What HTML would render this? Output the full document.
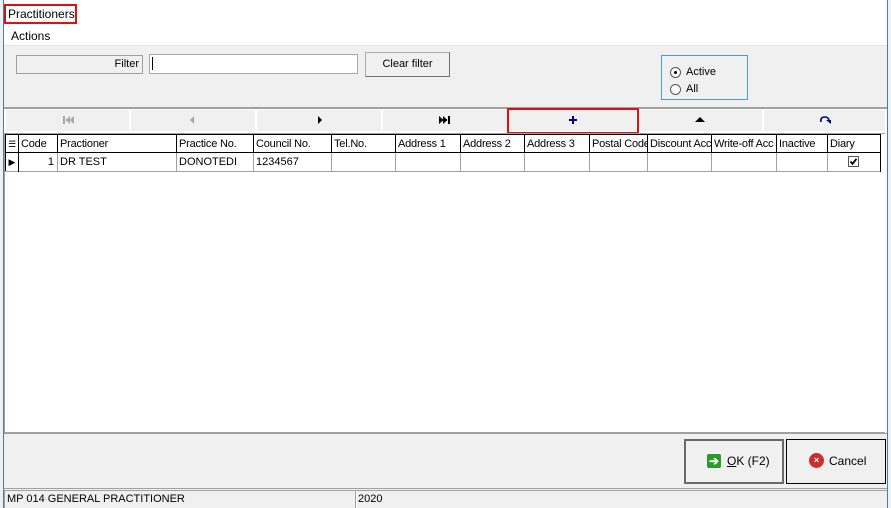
<!DOCTYPE html>
<html><head><style>
*{margin:0;padding:0;box-sizing:border-box}
body{width:891px;height:508px;position:relative;overflow:hidden;background:#fff;font-family:"Liberation Sans",sans-serif;font-size:11px;color:#000}
.a{position:absolute}
.hc{position:absolute;top:0;height:18px;border-right:1px solid #000;padding-left:2px;line-height:18px;white-space:nowrap;overflow:hidden;letter-spacing:-0.2px}
.dc{position:absolute;top:0;height:19px;border-right:1px solid #a0a0a0;padding-left:2px;line-height:19px;white-space:nowrap;overflow:hidden}
.nb{position:absolute;top:110px;height:21px;background:#f0f0f0}
.nb svg{position:absolute;left:50%;top:5px;margin-left:-6px}
</style></head><body>
<div class="a" style="left:0;top:0;width:4px;height:508px;background:#f0f0f0"></div>
<div class="a" style="left:3px;top:0;width:1px;height:508px;background:#3c7fd0"></div>
<div class="a" style="left:887px;top:0;width:4px;height:508px;background:#f0f0f0"></div>
<div class="a" style="left:887px;top:0;width:1px;height:508px;background:#3c7fd0"></div>
<div class="a" style="left:4px;top:4px;width:73px;height:20px;border:2px solid #e01010"></div>
<div class="a" style="left:8px;top:7px;font-size:12px">Practitioners</div>
<div class="a" style="left:11px;top:29px;font-size:12px">Actions</div>
<div class="a" style="left:4px;top:45px;width:883px;height:63px;background:#f0f0f0;border-top:1px solid #e6e6e6"></div>
<div class="a" style="left:16px;top:55px;width:127px;height:19px;border:1px solid #a0a0a0;text-align:right;padding-right:3px;line-height:17px">Filter</div>
<div class="a" style="left:149px;top:54px;width:209px;height:20px;background:#fff;border:1px solid #a8a8a8"></div>
<div class="a" style="left:152px;top:57px;width:1px;height:13px;background:#000"></div>
<div class="a" style="left:365px;top:52px;width:85px;height:25px;border:1px solid #adadad;border-right-color:#707070;border-bottom-color:#707070;background:#f0f0f0;text-align:center;line-height:23px">Clear filter</div>
<div class="a" style="left:661px;top:55px;width:87px;height:45px;border:1px solid #4a98e6"></div>
<div class="a" style="left:670px;top:67px;width:11px;height:11px;border-radius:50%;border:1px solid #555;background:#fff"></div>
<div class="a" style="left:674px;top:71px;width:3px;height:3px;border-radius:50%;background:#000"></div>
<div class="a" style="left:686px;top:66px">Active</div>
<div class="a" style="left:670px;top:84px;width:11px;height:11px;border-radius:50%;border:1px solid #555;background:#fff"></div>
<div class="a" style="left:686px;top:83px">All</div>
<div class="a" style="left:4px;top:107px;width:883px;height:26px;background:#fff;border-top:2px solid #a0a0a0"></div>
<div class="nb" style="left:6px;width:123px"><svg width="12" height="10"><path d="M1 1h2v8H1zM8 1L3.5 5 8 9zM12 1L7.5 5 12 9z" fill="#a8a8a8"/></svg></div>
<div class="nb" style="left:131px;width:124px"><svg width="12" height="10"><path d="M7 1L3 5 7 9z" fill="#a8a8a8"/></svg></div>
<div class="nb" style="left:257px;width:124px"><svg width="12" height="10"><path d="M5 1L9 5 5 9z" fill="#000"/></svg></div>
<div class="nb" style="left:383px;width:124px"><svg width="12" height="10"><path d="M0 1L4.5 5 0 9zM4 1L8.5 5 4 9zM9 1h2v8H9z" fill="#000"/></svg></div>
<div class="nb" style="left:509px;width:127px"><svg width="12" height="10"><path d="M5 1h2v3h3v2H7v3H5V6H2V4h3z" fill="#000080"/></svg></div>
<div class="nb" style="left:638px;width:124px"><svg width="12" height="10"><path d="M1 7L6 2 11 7z" fill="#000"/></svg></div>
<div class="nb" style="left:764px;width:121px"><svg width="12" height="10"><path d="M2 7Q1 2 6 2Q9 2 10 5" fill="none" stroke="#000080" stroke-width="1.6"/><path d="M7 5h5v4z" fill="#000080"/></svg></div>
<div class="a" style="left:507px;top:108px;width:132px;height:26px;border:2px solid #e01010"></div>
<div class="a" style="left:4px;top:133px;width:881px;height:300px;background:#fff;border:1px solid #a0a0a0;border-right:none"></div>
<div class="a" style="left:5px;top:134px;width:876px;height:38px;border:1px solid #000;border-bottom:none"></div>
<div class="a" style="left:5px;top:152px;width:876px;height:1px;background:#000"></div>
<div class="a" style="left:5px;top:171px;width:876px;height:1px;background:#a0a0a0"></div>
<div class="a" style="left:6px;top:135px;width:875px;height:17px">
<div class="hc" style="left:0;width:13px;padding:0;text-align:center;font-size:9px">☰</div>
<div class="hc" style="left:13px;width:39px">Code</div>
<div class="hc" style="left:52px;width:119px">Practioner</div>
<div class="hc" style="left:171px;width:77px">Practice No.</div>
<div class="hc" style="left:248px;width:78px">Council No.</div>
<div class="hc" style="left:326px;width:64px">Tel.No.</div>
<div class="hc" style="left:390px;width:65px">Address 1</div>
<div class="hc" style="left:455px;width:64px">Address 2</div>
<div class="hc" style="left:519px;width:65px">Address 3</div>
<div class="hc" style="left:584px;width:58px">Postal Code</div>
<div class="hc" style="left:642px;width:64px">Discount Acc</div>
<div class="hc" style="left:706px;width:65px">Write-off Acc</div>
<div class="hc" style="left:771px;width:51px">Inactive</div>
<div class="hc" style="left:822px;width:53px">Diary</div>
</div>
<div class="a" style="left:6px;top:153px;width:875px;height:18px">
<div class="dc" style="left:0;width:13px;padding:0;border-right-color:#000;text-align:center;font-size:9px">▶</div>
<div class="dc" style="left:13px;width:39px;text-align:right;padding-right:3px">1</div>
<div class="dc" style="left:52px;width:119px">DR TEST</div>
<div class="dc" style="left:171px;width:77px">DONOTEDI</div>
<div class="dc" style="left:248px;width:78px">1234567</div>
<div class="dc" style="left:326px;width:64px"></div>
<div class="dc" style="left:390px;width:65px"></div>
<div class="dc" style="left:455px;width:64px"></div>
<div class="dc" style="left:519px;width:65px"></div>
<div class="dc" style="left:584px;width:58px"></div>
<div class="dc" style="left:642px;width:64px"></div>
<div class="dc" style="left:706px;width:65px"></div>
<div class="dc" style="left:771px;width:51px"></div>
<div class="dc" style="left:822px;width:53px;border-right-color:#000"></div>
</div>
<div class="a" style="left:848px;top:156px;width:11px;height:11px;border:1px solid #555;background:#fff"><svg width="9" height="9" style="position:absolute;left:0;top:0"><path d="M1.5 4.5L3.5 6.8 7.5 1.8" fill="none" stroke="#000" stroke-width="1.8"/></svg></div>
<div class="a" style="left:4px;top:433px;width:883px;height:56px;background:#f0f0f0;border-top:1px solid #a0a0a0"></div>
<div class="a" style="left:684px;top:439px;width:100px;height:45px;border:2px solid #6a6a6a;background:#f0f0f0"></div>
<div class="a" style="left:707px;top:454px;width:14px;height:14px;background:#2a9a2a;border-radius:2px;color:#fff;font-size:12px;line-height:14px;text-align:center;font-weight:bold">➔</div>
<div class="a" style="left:727px;top:454px;font-size:12px"><u>O</u>K (F2)</div>
<div class="a" style="left:786px;top:439px;width:100px;height:45px;border:1px solid #000;background:#f0f0f0"></div>
<div class="a" style="left:809px;top:453px;width:15px;height:15px;border-radius:50%;background:#c83030;color:#fff;font-size:9px;line-height:15px;text-align:center;font-weight:bold">×</div>
<div class="a" style="left:829px;top:454px;font-size:12px">Cancel</div>
<div class="a" style="left:4px;top:488px;width:883px;height:20px;background:#f0f0f0;border-top:1px solid #a0a0a0"></div>
<div class="a" style="left:4px;top:490px;width:351px;height:18px;border-top:1px solid #a0a0a0;border-left:1px solid #a0a0a0;padding-left:2px;line-height:17px">MP 014 GENERAL PRACTITIONER</div>
<div class="a" style="left:355px;top:490px;width:532px;height:18px;border-top:1px solid #a0a0a0;border-left:1px solid #a0a0a0;padding-left:2px;line-height:17px;box-shadow:inset 1px 0 #fff">2020</div>
</body></html>
